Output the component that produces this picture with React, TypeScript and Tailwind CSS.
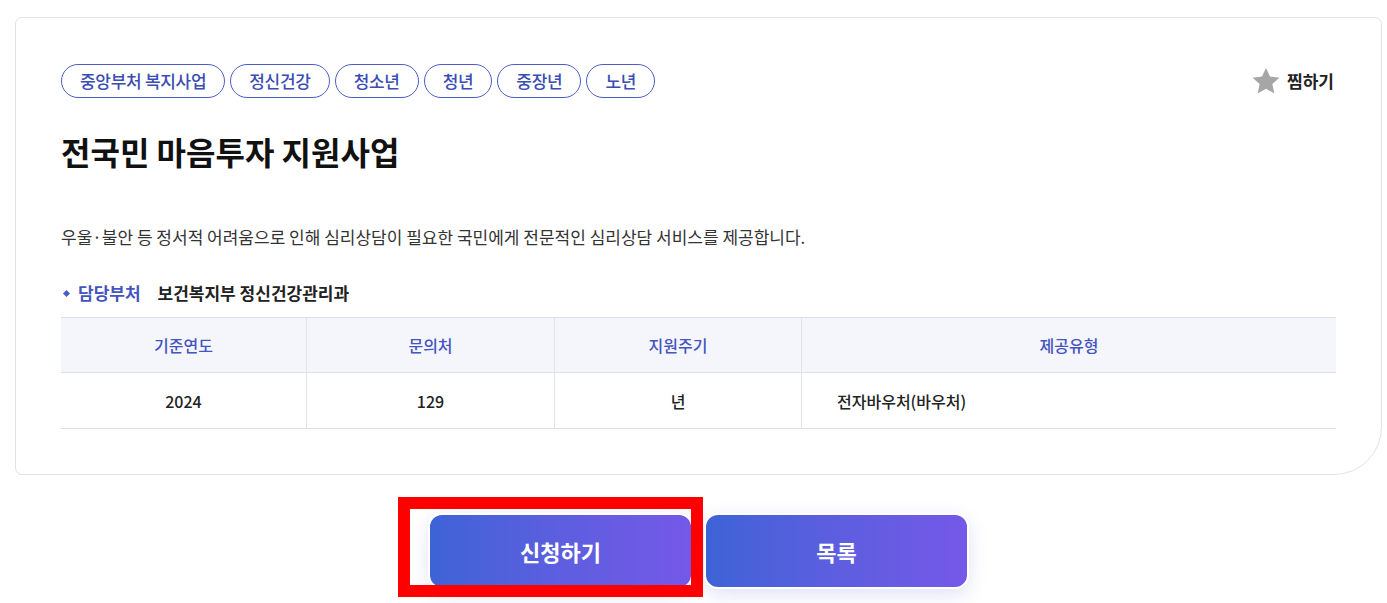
import React from "react";

const tags = ["중앙부처 복지사업", "정신건강", "청소년", "청년", "중장년", "노년"];

export default function App() {
  return (
    <div
      className="w-[1387px] h-[603px] bg-white overflow-hidden"
      style={{ fontFamily: '"Noto Sans CJK KR", "Noto Sans", sans-serif' }}
    >
      <div className="ml-[15px] mt-[17px] w-[1367px] border border-[#e2e2e2] rounded-[7px] rounded-br-[48px] px-[45px] pt-[46px] pb-[45px]">
        <div className="flex items-center justify-between">
          <div className="flex gap-[5px]">
            {tags.map((t) => (
              <span
                key={t}
                className="h-[34px] px-[18px] rounded-full border border-[#4c5dc6] text-[17px] font-medium text-[#3b4db3] flex items-center tracking-[-0.3px]"
              >
                {t}
              </span>
            ))}
          </div>
          <div className="flex items-center gap-[5px] mr-[2px]">
            <svg width="32" height="31" viewBox="0 0 24 24" style={{ filter: "blur(0.5px)" }}>
              <path
                d="M12 1.5l3.1 6.7 7.3.8-5.5 5 1.6 7.2L12 17.6l-6.5 3.6 1.6-7.2-5.5-5 7.3-.8z"
                fill="#a6a6a6"
              />
            </svg>
            <span className="text-[17px] font-bold text-[#222]">찜하기</span>
          </div>
        </div>

        <h1 className="mt-[33px] text-[32px] leading-[40px] font-bold text-[#111]">
          전국민 마음투자 지원사업
        </h1>

        <p className="mt-[54px] text-[17px] leading-[24px] text-[#333]">
          우울·불안 등 정서적 어려움으로 인해 심리상담이 필요한 국민에게 전문적인 심리상담 서비스를 제공합니다.
        </p>

        <div className="mt-[32px] flex items-center text-[17px] leading-[24px]">
          <span className="w-[5px] h-[5px] bg-[#4c5dc6] rotate-45 ml-[3px] mr-[9px]"></span>
          <span className="font-bold text-[#4454c0]">담당부처</span>
          <span className="ml-[17px] font-bold text-[#222]">보건복지부 정신건강관리과</span>
        </div>

        <div className="mt-[12px] border-t border-[#dcdfe6]">
          <div className="grid grid-cols-[246px_248px_247px_1fr] bg-[#f5f6fb] h-[55px] border-b border-[#dcdfe6] text-[16px] font-medium text-[#4454c0]">
            <div className="flex items-center justify-center border-r border-[#e1e3ea]">기준연도</div>
            <div className="flex items-center justify-center border-r border-[#e1e3ea]">문의처</div>
            <div className="flex items-center justify-center border-r border-[#e1e3ea]">지원주기</div>
            <div className="flex items-center justify-center">제공유형</div>
          </div>
          <div className="grid grid-cols-[246px_248px_247px_1fr] h-[56px] border-b border-[#dcdfe6] text-[16px] font-medium text-[#222]">
            <div className="flex items-center justify-center border-r border-[#e1e3ea]">2024</div>
            <div className="flex items-center justify-center border-r border-[#e1e3ea]">129</div>
            <div className="flex items-center justify-center border-r border-[#e1e3ea]">년</div>
            <div className="flex items-center pl-[35px]">전자바우처(바우처)</div>
          </div>
        </div>
      </div>

      <div className="ml-[15px] w-[1367px] mt-[38px] flex justify-center gap-[11px]">
        <div className="relative">
          <button className="w-[265px] h-[76px] rounded-[14px] border-2 border-white bg-gradient-to-r from-[#3d63d6] to-[#7558e8] text-white text-[22px] font-bold shadow-[0_6px_18px_rgba(90,100,210,0.18)]">
            신청하기
          </button>
          <div className="absolute left-[-30px] top-[-16px] w-[305px] h-[100px] border-[12px] border-[#ff0000] pointer-events-none"></div>
        </div>
        <button className="w-[265px] h-[76px] rounded-[14px] border-2 border-white bg-gradient-to-r from-[#3d63d6] to-[#7558e8] text-white text-[22px] font-bold shadow-[0_6px_18px_rgba(90,100,210,0.18)]">
          목록
        </button>
      </div>
    </div>
  );
}
